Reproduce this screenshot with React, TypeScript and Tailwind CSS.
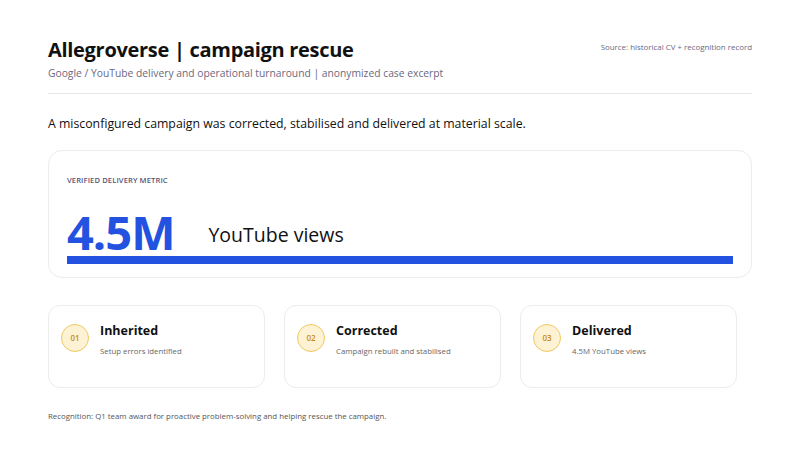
export default function App() {
  const steps = [
    ["01", "Inherited", "Setup errors identified"],
    ["02", "Corrected", "Campaign rebuilt and stabilised"],
    ["03", "Delivered", "4.5M YouTube views"],
  ];
  return (
    <div className="w-[800px] h-[450px] bg-white px-[48px] pt-[36px] text-[#111]" style={{ fontFamily: '"Open Sans", "Noto Sans", sans-serif' }}>
      <div className="flex justify-between items-start">
        <div>
          <div className="text-[20px] font-bold leading-[28px] tracking-[-0.3px]">Allegroverse | campaign rescue</div>
          <div className="text-[10.3px] text-[#6b6880] mt-[2px]">Google / YouTube delivery and operational turnaround | anonymized case excerpt</div>
        </div>
        <div className="text-[7.9px] text-[#6b6880] mt-[6px]">Source: historical CV + recognition record</div>
      </div>
      <div className="h-px bg-[#e5e7eb] mt-[12px]" />
      <div className="text-[12.3px] mt-[20px] leading-[20px]">A misconfigured campaign was corrected, stabilised and delivered at material scale.</div>
      <div className="mt-[16px] h-[128px] rounded-[14px] border border-[#ececf0] px-[18px] pt-[24px]">
        <div className="text-[7.6px] font-semibold text-[#5a5478] tracking-[0.1px]">VERIFIED DELIVERY METRIC</div>
        <div className="flex items-end mt-[22px] h-[46px]">
          <span className="text-[47px] font-bold text-[#2352e0] leading-[46px] tracking-[-1px]">4.5M</span>
          <span className="text-[19.5px] ml-[34px] mb-[6px]">YouTube views</span>
        </div>
        <div className="h-[8px] bg-[#2352e0] mt-[1px]" />
      </div>
      <div className="flex gap-[19px] mt-[27px]">
        {steps.map(([n, t, d]) => (
          <div key={n} className="w-[217px] h-[83px] rounded-[12px] border border-[#ececf0] flex items-start pl-[12px] pt-[16px]">
            <div className="w-[28px] h-[28px] mt-[2px] rounded-full bg-[#fdf3d4] border border-[#f0c860] flex items-center justify-center text-[8px] font-semibold text-[#c98a10]">{n}</div>
            <div className="ml-[11px]">
              <div className="text-[12.5px] font-bold leading-[18px]">{t}</div>
              <div className="text-[7.8px] text-[#666] mt-[6px]">{d}</div>
            </div>
          </div>
        ))}
      </div>
      <div className="text-[7.85px] text-[#555] mt-[23px]">Recognition: Q1 team award for proactive problem-solving and helping rescue the campaign.</div>
    </div>
  );
}
